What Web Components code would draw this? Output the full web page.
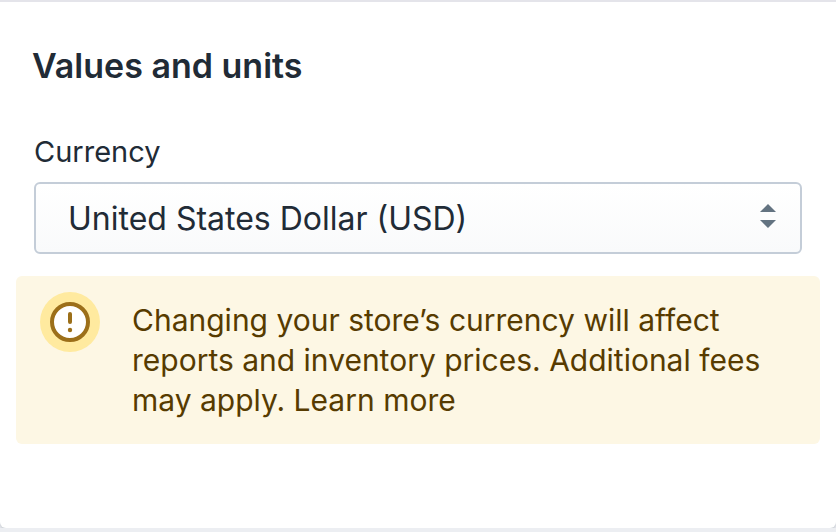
<!DOCTYPE html>
<html lang="en"><head><meta charset="utf-8"><title>Values and units</title>
<style>
body{margin:0;background:#eceef2;color:#212b36;font-family:Inter,"Liberation Sans",sans-serif}
</style></head><body>
<settings-card heading="Values and units">
<select-field label="Currency"></select-field>
<warning-banner slot="notice">Changing your store’s currency will affect reports and inventory prices. Additional fees may apply. <a href="#">Learn more</a></warning-banner>
</settings-card>
<script>
class SettingsCard extends HTMLElement{
constructor(){super();this.attachShadow({mode:'open'}).innerHTML=`<style>
:host{display:block;padding-top:2px}
section{background:#fff;border-radius:0 0 6px 6px;padding:40px 16px 84px;box-shadow:0 2px 2px #d0d5da,0 0 0 2px #e4e4ea}
h2{margin:0 16px 44px;font-size:34px;line-height:48px;font-weight:600}
.body{margin:0 18px 22px}
</style><section><h2></h2><div class="body"><slot></slot></div><slot name="notice"></slot></section>`}
connectedCallback(){this.shadowRoot.querySelector('h2').textContent=this.getAttribute('heading')}
}
class SelectField extends HTMLElement{
constructor(){super();this.attachShadow({mode:'open'}).innerHTML=`<style>
:host{display:block}
label{display:block;font-size:29px;line-height:36px;margin-bottom:12px}
.control{display:grid;align-items:center}
select,svg{grid-area:1/1}
select{appearance:none;width:100%;height:72px;box-sizing:border-box;border:2px solid #c4cdd8;border-radius:6px;background:linear-gradient(#fff,#f9fafb);padding:0 64px 0 32px;font-family:inherit;font-size:32px;color:inherit}
svg{justify-self:end;margin:0 26px 4px 0;pointer-events:none}
</style><label for="choice"></label><div class="control"><select id="choice"><option>United States Dollar (USD)</option></select>
<svg width="16" height="24" viewBox="0 0 16 24" fill="#637381" aria-hidden="true"><path d="M0 8 8 0l8 8zM0 16h16l-8 8z"/></svg></div>`}
connectedCallback(){this.shadowRoot.querySelector('label').textContent=this.getAttribute('label')}
}
class WarningBanner extends HTMLElement{
constructor(){super();this.attachShadow({mode:'open'}).innerHTML=`<style>
:host{display:flex;gap:32px;padding:16px 32px 24px 24px;box-sizing:border-box;border-radius:6px;background:#fdf7e4;color:#573b00}
svg{flex:none}
p{margin:8px 0 0;font-size:30px;line-height:40px}
::slotted(a){color:inherit;text-decoration:none}
</style><svg width="60" height="60" viewBox="0 0 60 60" aria-hidden="true"><circle cx="30" cy="30" r="30" fill="#ffea9f"/><circle cx="30" cy="30" r="18" fill="#fff" stroke="#9c6f19" stroke-width="4"/><path d="M30 22v8" stroke="#9c6f19" stroke-width="4" stroke-linecap="round"/><circle cx="30" cy="38" r="2.2" fill="#9c6f19"/></svg><p><slot></slot></p>`}
}
customElements.define('settings-card',SettingsCard);
customElements.define('select-field',SelectField);
customElements.define('warning-banner',WarningBanner);
</script></body></html>
